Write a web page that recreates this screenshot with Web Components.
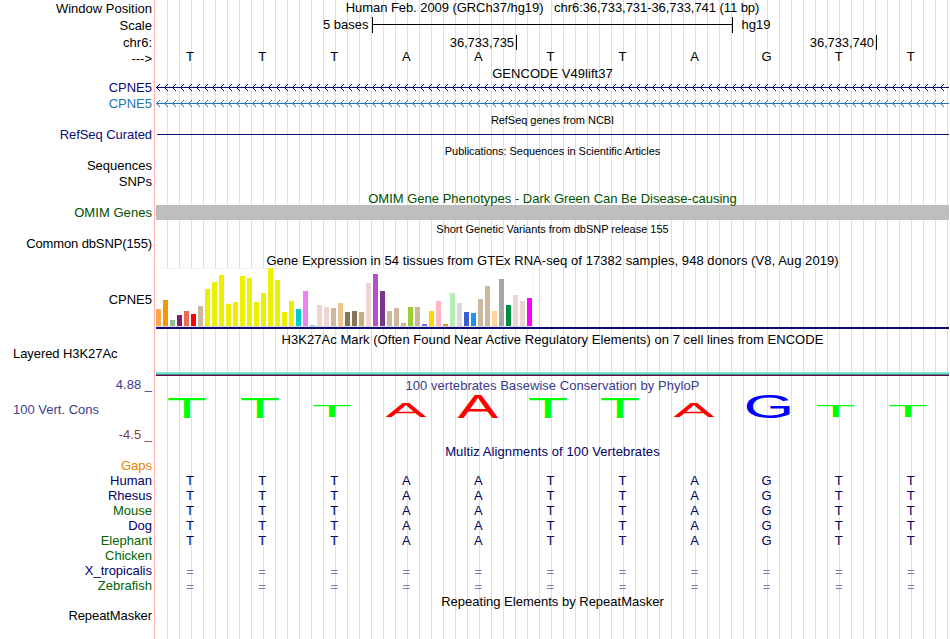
<!DOCTYPE html>
<html lang="en">
<head>
<meta charset="utf-8">
<title>UCSC Genome Browser - CPNE5</title>
<style>
    body {
        margin: 0;
        background: #fff;
        font: 13px/15px "Liberation Sans", Arial, Helvetica, sans-serif;
        overflow: hidden;
    }
</style>
</head>
<body>
<genome-browser></genome-browser>
<script>
const NAVY = '#0c0c78';
const BLUE = '#000066';
const GREEN = '#006400';

// label, row height, colour, side, letter spacing
const LABELS = [
    ['Window Position', 16], ['Scale', 17], ['chr6:', 17], ['--->', 16],
    ['CPNE5', 29, NAVY], ['CPNE5', 16, '#1a76b4'], ['RefSeq Curated', 31, NAVY, 'right', -0.07],
    ['Sequences', 31], ['SNPs', 16], ['OMIM Genes', 31, '#005000', 'right', 0.05],
    ['Common dbSNP(155)', 31, '#000', 'right', -0.12], ['CPNE5', 56], ['Layered H3K27Ac', 54, '#000', 'left', -0.07],
    ['4.88 _', 31, '#3c3c8c'], ['100 Vert. Cons', 25, '#3c3c8c', 'left'], ['-4.5 _', 25, '#8c3c3c'],
    ['Gaps', 31, '#e68200'], ['Human', 15, BLUE], ['Rhesus', 15, BLUE], ['Mouse', 15, GREEN],
    ['Dog', 15, BLUE], ['Elephant', 15, GREEN], ['Chicken', 15, GREEN],
    ['X_tropicalis', 15, BLUE], ['Zebrafish', 15, GREEN], ['RepeatMasker', 30, '#000', 'right', -0.08]
];

// GTEx tissues: bar height, colour
const TISSUES = [
    [17, '#ffa54f'], [26, '#ee9a00'], [6, '#8fbc8f'], [11, '#8b1c62'], [15, '#ee6a50'], [12, '#ff0000'],
    [20, '#cdb79e'], [37, '#eeee00'], [44, '#eeee00'], [51, '#eeee00'], [22, '#eeee00'], [24, '#eeee00'],
    [50, '#eeee00'], [48, '#eeee00'], [24, '#eeee00'], [33, '#eeee00'], [58, '#eeee00'], [46, '#eeee00'],
    [14, '#eeee00'], [25, '#eeee00'], [17, '#00cdcd'], [35, '#ee82ee'], [1, '#9ac0cd'], [21, '#eed5d2'],
    [19, '#eed5d2'], [18, '#cdb79e'], [23, '#eec591'], [14, '#8b7355'], [15, '#8b7355'], [14, '#cdaa7d'],
    [43, '#eed5d2'], [52, '#b452cd'], [35, '#7a378b'], [15, '#cdb79e'], [18, '#cdb79e'], [3, '#cdb79e'],
    [19, '#9acd32'], [19, '#cdb79e'], [2, '#7a67ee'], [15, '#ffd700'], [25, '#ffb6c1'], [2, '#cd9b1d'],
    [33, '#b4eeb4'], [23, '#d9d9d9'], [14, '#3a5fcd'], [13, '#1e90ff'], [27, '#cdb79e'], [40, '#cdb79e'],
    [15, '#ffd39b'], [47, '#a6a6a6'], [21, '#008b45'], [31, '#eed5d2'], [25, '#eed5d2'], [28, '#ff00ff']
];

class TrackLabel extends HTMLElement {
    connectedCallback() {
        this.attachShadow({ mode: 'open' });
        this.shadowRoot.innerHTML = `
            <style>
                :host {
                    display: flex;
                    align-items: flex-end;
                    justify-content: flex-end;
                    flex: none;
                    white-space: nowrap;
                }
                :host([side="left"]) {
                    justify-content: flex-start;
                    padding-left: 13px;
                }
            </style>
            <span><slot></slot></span>
        `;
    }
}

class TrackTitle extends HTMLElement {
    connectedCallback() {
        this.attachShadow({ mode: 'open' });
        this.shadowRoot.innerHTML = `
            <style>
                :host {
                    display: block;
                    height: 15px;
                    text-align: center;
                }
                :host([small]) {
                    font-size: 11px;
                }
                span {
                    white-space: pre;
                }
            </style>
            <span><slot></slot></span>
        `;
    }
}

// One letter per base, spread over the whole window
class BaseRow extends HTMLElement {
    connectedCallback() {
        const cells = [...this.getAttribute('seq')].map(b => `<span>${b}</span>`).join('');
        this.attachShadow({ mode: 'open' });
        this.shadowRoot.innerHTML = `
            <style>
                :host {
                    display: grid;
                    grid-template-columns: repeat(11, 1fr);
                    height: 15px;
                    margin: 0 2.2px 0 -2px;
                    text-align: center;
                }
            </style>
            ${cells}
        `;
    }
}

class ScaleBar extends HTMLElement {
    connectedCallback() {
        this.attachShadow({ mode: 'open' });
        this.shadowRoot.innerHTML = `
            <style>
                :host {
                    display: flex;
                    height: 16px;
                    padding-left: 167px;
                }
                .bar {
                    width: 359px;
                    border: solid #000;
                    border-width: 0 1px;
                    margin: 0 9px 0 3px;
                    background: linear-gradient(#000, #000) 0 7px / 100% 1px no-repeat;
                }
            </style>
            <span>5 bases</span><div class="bar"></div><span>hg19</span>
        `;
    }
}

class PositionRuler extends HTMLElement {
    connectedCallback() {
        this.attachShadow({ mode: 'open' });
        this.shadowRoot.innerHTML = `
            <style>
                :host {
                    display: flex;
                    height: 15px;
                    letter-spacing: -0.08px;
                }
                span {
                    box-sizing: border-box;
                    text-align: right;
                    border-right: 1px solid #000;
                    padding-right: 2px;
                }
            </style>
            <span style="width: 361px">36,733,735</span><span style="width: 360px">36,733,740</span>
        `;
    }
}

class GeneLine extends HTMLElement {
    connectedCallback() {
        let arrows = '';
        for (let x = 0; x < 792; x += 8) {
            arrows += `M${x + 3} 0h1v1h-1zM${x + 2} 1h1v1h-1zM${x + 1} 2h1v1h-1zM${x + 1} 4h1v1h-1zM${x + 2} 5h1v1h-1zM${x + 3} 6h1v1h-1z`;
        }
        this.attachShadow({ mode: 'open' });
        this.shadowRoot.innerHTML = `
            <style>
                :host {
                    display: block;
                    height: 7px;
                }
                svg {
                    display: block;
                }
            </style>
            <svg width="793" height="7" fill="currentColor" shape-rendering="crispEdges">
                <rect y="3" width="793" height="1"/><path d="${arrows}"/>
            </svg>
        `;
    }
}

class GtexChart extends HTMLElement {
    connectedCallback() {
        const bars = TISSUES.map(([h, c]) => `<i style="height: ${h}px; background: ${c}"></i>`).join('');
        this.attachShadow({ mode: 'open' });
        this.shadowRoot.innerHTML = `
            <style>
                :host {
                    display: block;
                    border-bottom: 2px solid #0c0c78;
                }
                .plot {
                    box-sizing: border-box;
                    display: flex;
                    align-items: flex-end;
                    gap: 2px;
                    width: 378px;
                    height: 59px;
                    background: #fff;
                    box-shadow: inset 0 1px #f3f3f3, inset 1px 0 #f3f3f3, inset -1px 0 #f3f3f3;
                    border-bottom: 1px solid #d8d8d8;
                }
                i {
                    width: 5px;
                }
            </style>
            <div class="plot">${bars}</div>
        `;
    }
}

// Letters stretched to the conservation score
class ConservationLogo extends HTMLElement {
    connectedCallback() {
        // ink boxes in font units: left, width, cap height, overshoot
        const ink = { T: [42, 1167, 1409, 0], A: [3, 1361, 1409, 0], G: [103, 1363, 1430, 20] };
        const fill = { T: '#00ff00', A: '#ff0000', G: '#0000ff' };
        // base, left, width, top, bottom
        const letters = [
            ['T', 12, 37.7, 4, 24], ['T', 85, 37.7, 4, 24], ['T', 157.3, 37.5, 12, 23],
            ['A', 229.5, 40.7, 9, 23], ['A', 301.5, 40.7, 1, 24], ['T', 373, 37.7, 4, 24],
            ['T', 445, 37.7, 4, 24], ['A', 517.5, 40.7, 9, 23], ['G', 590.7, 43.5, 0, 24],
            ['T', 661.2, 37.5, 12, 23], ['T', 733.3, 37.5, 12, 23]
        ];
        const text = letters.map(([b, x, w, top, bottom]) => {
            const [left, width, cap, over] = ink[b];
            const sx = w / width * 20.48;
            const sy = (bottom - top) / (cap + over) * 20.48;
            const tx = x - left / 20.48 * sx;
            const ty = bottom - over / 20.48 * sy;
            return `<text fill="${fill[b]}" transform="matrix(${sx} 0 0 ${sy} ${tx} ${ty})">${b}</text>`;
        }).join('');
        this.attachShadow({ mode: 'open' });
        this.shadowRoot.innerHTML = `
            <style>
                :host {
                    display: block;
                    height: 24px;
                }
                svg {
                    display: block;
                    font-size: 100px;
                    overflow: visible;
                }
            </style>
            <svg width="793" height="24">${text}</svg>
        `;
    }
}

class GenomeBrowser extends HTMLElement {
    connectedCallback() {
        const labels = LABELS.map(([text, h, color = '#000', side = 'right', spacing = 0]) =>
            `<track-label side="${side}" style="height: ${h}px; color: ${color}; letter-spacing: ${spacing}px">${text.replace('>', '&gt;')}</track-label>`).join('');
        this.attachShadow({ mode: 'open' });
        this.shadowRoot.innerHTML = `
            <style>
                :host {
                    display: flex;
                    width: 949px;
                    height: 639px;
                }
                .labels {
                    box-sizing: border-box;
                    display: flex;
                    flex-direction: column;
                    width: 155px;
                    padding-right: 2px;
                    border-right: 1px solid #ffb4b4;
                }
                .tracks {
                    width: 793px;
                    padding-left: 1px;
                    background: repeating-linear-gradient(90deg, #dcdcf5 0 1px, transparent 1px 12px) 12px 0 no-repeat;
                }
                .refseq {
                    height: 1px;
                    margin: 6px 0 13px 1px;
                    background: #0c0c78;
                }
                .omim {
                    height: 15px;
                    margin: -1px 0 2px;
                    background: #bebebe;
                }
                .h3k {
                    height: 4px;
                    margin: 25px 0 3px;
                    background: linear-gradient(#74e8cc 2px, #5078a0 2px 3px, #641432 3px);
                }
                .align {
                    margin-top: 14px;
                    color: #000066;
                }
                .none {
                    margin-top: 16px;
                    color: #7878b0;
                }
            </style>
            <div class="labels">${labels}</div>
            <div class="tracks">
                <track-title style="letter-spacing: -0.06px">Human Feb. 2009 (GRCh37/hg19)   chr6:36,733,731-36,733,741 (11 bp)</track-title>
                <scale-bar style="margin-top: 2px"></scale-bar>
                <position-ruler style="margin-top: 2px"></position-ruler>
                <base-row seq="TTTAATTAGTT" style="margin-top: -1px"></base-row>
                <track-title style="margin-top: 2px; letter-spacing: 0.04px">GENCODE V49lift37</track-title>
                <gene-line style="color: #0c0c78; margin-top: 3px"></gene-line>
                <gene-line style="color: #1a76b4; margin-top: 9px"></gene-line>
                <track-title small style="margin-top: 6px; letter-spacing: -0.04px">RefSeq genes from NCBI</track-title>
                <div class="refseq"></div>
                <track-title small style="margin-top: -4px; letter-spacing: -0.05px">Publications: Sequences in Scientific Articles</track-title>
                <track-title style="margin-top: 32px; color: #005000">OMIM Gene Phenotypes - Dark Green Can Be Disease-causing</track-title>
                <div class="omim"></div>
                <track-title small style="letter-spacing: -0.02px">Short Genetic Variants from dbSNP release 155</track-title>
                <track-title style="margin-top: 16px; letter-spacing: 0.055px">Gene Expression in 54 tissues from GTEx RNA-seq of 17382 samples, 948 donors (V8, Aug 2019)</track-title>
                <gtex-chart></gtex-chart>
                <track-title style="margin-top: 3px; letter-spacing: 0.05px">H3K27Ac Mark (Often Found Near Active Regulatory Elements) on 7 cell lines from ENCODE</track-title>
                <div class="h3k"></div>
                <track-title style="color: #3c3c8c; margin-top: -1px; letter-spacing: 0.04px">100 vertebrates Basewise Conservation by PhyloP</track-title>
                <conservation-logo style="margin-top: 1px"></conservation-logo>
                <track-title style="color: #000066; margin-top: 26px; letter-spacing: 0.1px">Multiz Alignments of 100 Vertebrates</track-title>
                <div class="align">
                    <base-row seq="TTTAATTAGTT"></base-row>
                    <base-row seq="TTTAATTAGTT"></base-row>
                    <base-row seq="TTTAATTAGTT"></base-row>
                    <base-row seq="TTTAATTAGTT"></base-row>
                    <base-row seq="TTTAATTAGTT"></base-row>
                </div>
                <div class="none">
                    <base-row seq="==========="></base-row>
                    <base-row seq="==========="></base-row>
                </div>
                <track-title>Repeating Elements by RepeatMasker</track-title>
            </div>
        `;
    }
}

customElements.define('track-label', TrackLabel);
customElements.define('track-title', TrackTitle);
customElements.define('base-row', BaseRow);
customElements.define('scale-bar', ScaleBar);
customElements.define('position-ruler', PositionRuler);
customElements.define('gene-line', GeneLine);
customElements.define('gtex-chart', GtexChart);
customElements.define('conservation-logo', ConservationLogo);
customElements.define('genome-browser', GenomeBrowser);
</script>
</body>
</html>
